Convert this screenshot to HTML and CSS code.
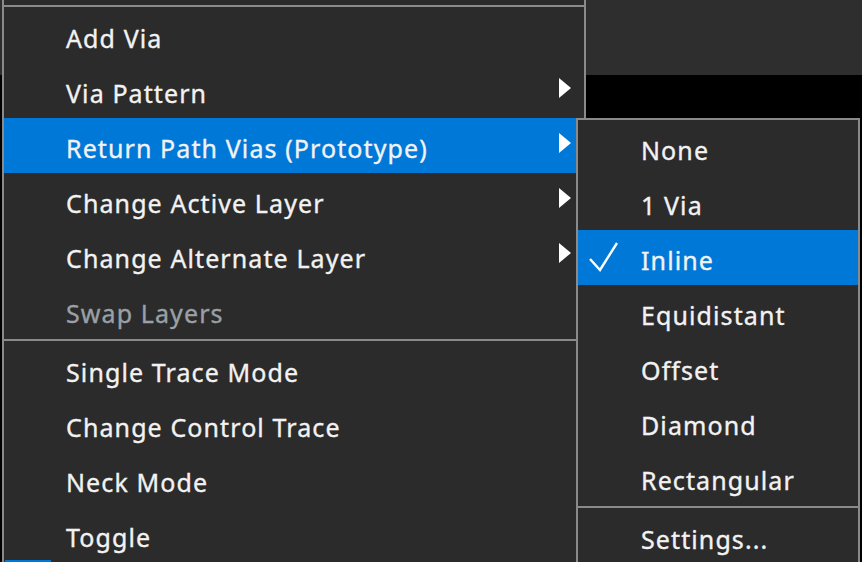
FILE: index.html
```html
<!DOCTYPE html>
<html lang="en">
<head>
    <meta charset="UTF-8">
    <title>Via Menu</title>
    <link rel="stylesheet" href="styles.css">
</head>
<body>

<div class="backdrop"></div>

<div class="menu main-menu">
    <div class="sep"></div>
    <div class="item">Add Via</div>
    <div class="item sub">Via Pattern</div>
    <div class="item sub active">Return Path Vias (Prototype)</div>
    <div class="item sub">Change Active Layer</div>
    <div class="item sub">Change Alternate Layer</div>
    <div class="item disabled">Swap Layers</div>
    <div class="sep"></div>
    <div class="item">Single Trace Mode</div>
    <div class="item">Change Control Trace</div>
    <div class="item">Neck Mode</div>
    <div class="item">Toggle</div>
</div>

<div class="menu sub-menu">
    <div class="item">None</div>
    <div class="item">1 Via</div>
    <div class="item active checked">Inline</div>
    <div class="item">Equidistant</div>
    <div class="item">Offset</div>
    <div class="item">Diamond</div>
    <div class="item">Rectangular</div>
    <div class="sep"></div>
    <div class="item">Settings...</div>
</div>

<div class="taskbar-hint"></div>

<script>
    // submenu arrows and check marks
    const arrow = '<svg class="arrow" width="12" height="20" viewBox="0 0 12 20"><polygon points="0,0 12,10 0,20" fill="#fff"/></svg>';
    const check = '<svg class="check" width="30" height="32" viewBox="0 0 30 32"><polyline points="2,18 12,29 29,2" fill="none" stroke="#fff" stroke-width="2.4"/></svg>';

    document.querySelectorAll('.main-menu .sub').forEach(el => {
        el.insertAdjacentHTML('beforeend', arrow);
    });
    document.querySelectorAll('.checked').forEach(el => {
        el.insertAdjacentHTML('afterbegin', check);
    });
</script>

</body>
</html>
```

FILE: styles.css
```css
body {
    margin: 0;
    width: 862px;
    height: 562px;
    overflow: hidden;
    position: relative;
    background-color: #000;
    font-family: "Noto Sans", "Open Sans", sans-serif;
    font-size: 25px;
    letter-spacing: 1.1px;
    -webkit-text-stroke: 0.35px currentColor;
    color: #f2f2f2;
}
.backdrop {
    height: 75px;
    background-color: #2e2e2e;
}
.menu {
    position: absolute;
    background-color: #2b2b2b;
    border: 2px solid #8a8a8a;
    box-sizing: border-box;
}
.main-menu {
    left: 2px;
    top: 0;
    width: 584px;
    height: 580px;
    border-top: none;
    padding-top: 4px;
}
.sub-menu {
    left: 576px;
    top: 118px;
    width: 284px;
    height: 470px;
}
.item {
    height: 55px;
    display: flex;
    align-items: center;
    position: relative;
    padding-left: 62px;
    padding-top: 5px;
    box-sizing: border-box;
    white-space: nowrap;
}
.sub-menu .item {
    padding-left: 63px;
}
.item.active {
    background-color: #0078d7;
}
.item.disabled {
    color: #9aa0a6;
}
.sep {
    height: 2px;
    margin: 1px 0;
    background-color: #8a8a8a;
}
.main-menu .sep:first-child {
    margin-top: 1px;
}
.arrow {
    position: absolute;
    left: 555px;
    top: 15px;
}
.check {
    position: absolute;
    left: 10px;
    top: 11px;
}
.taskbar-hint {
    position: absolute;
    left: 5px;
    bottom: 0;
    width: 46px;
    height: 2px;
    background-color: #0078d7;
}
```
